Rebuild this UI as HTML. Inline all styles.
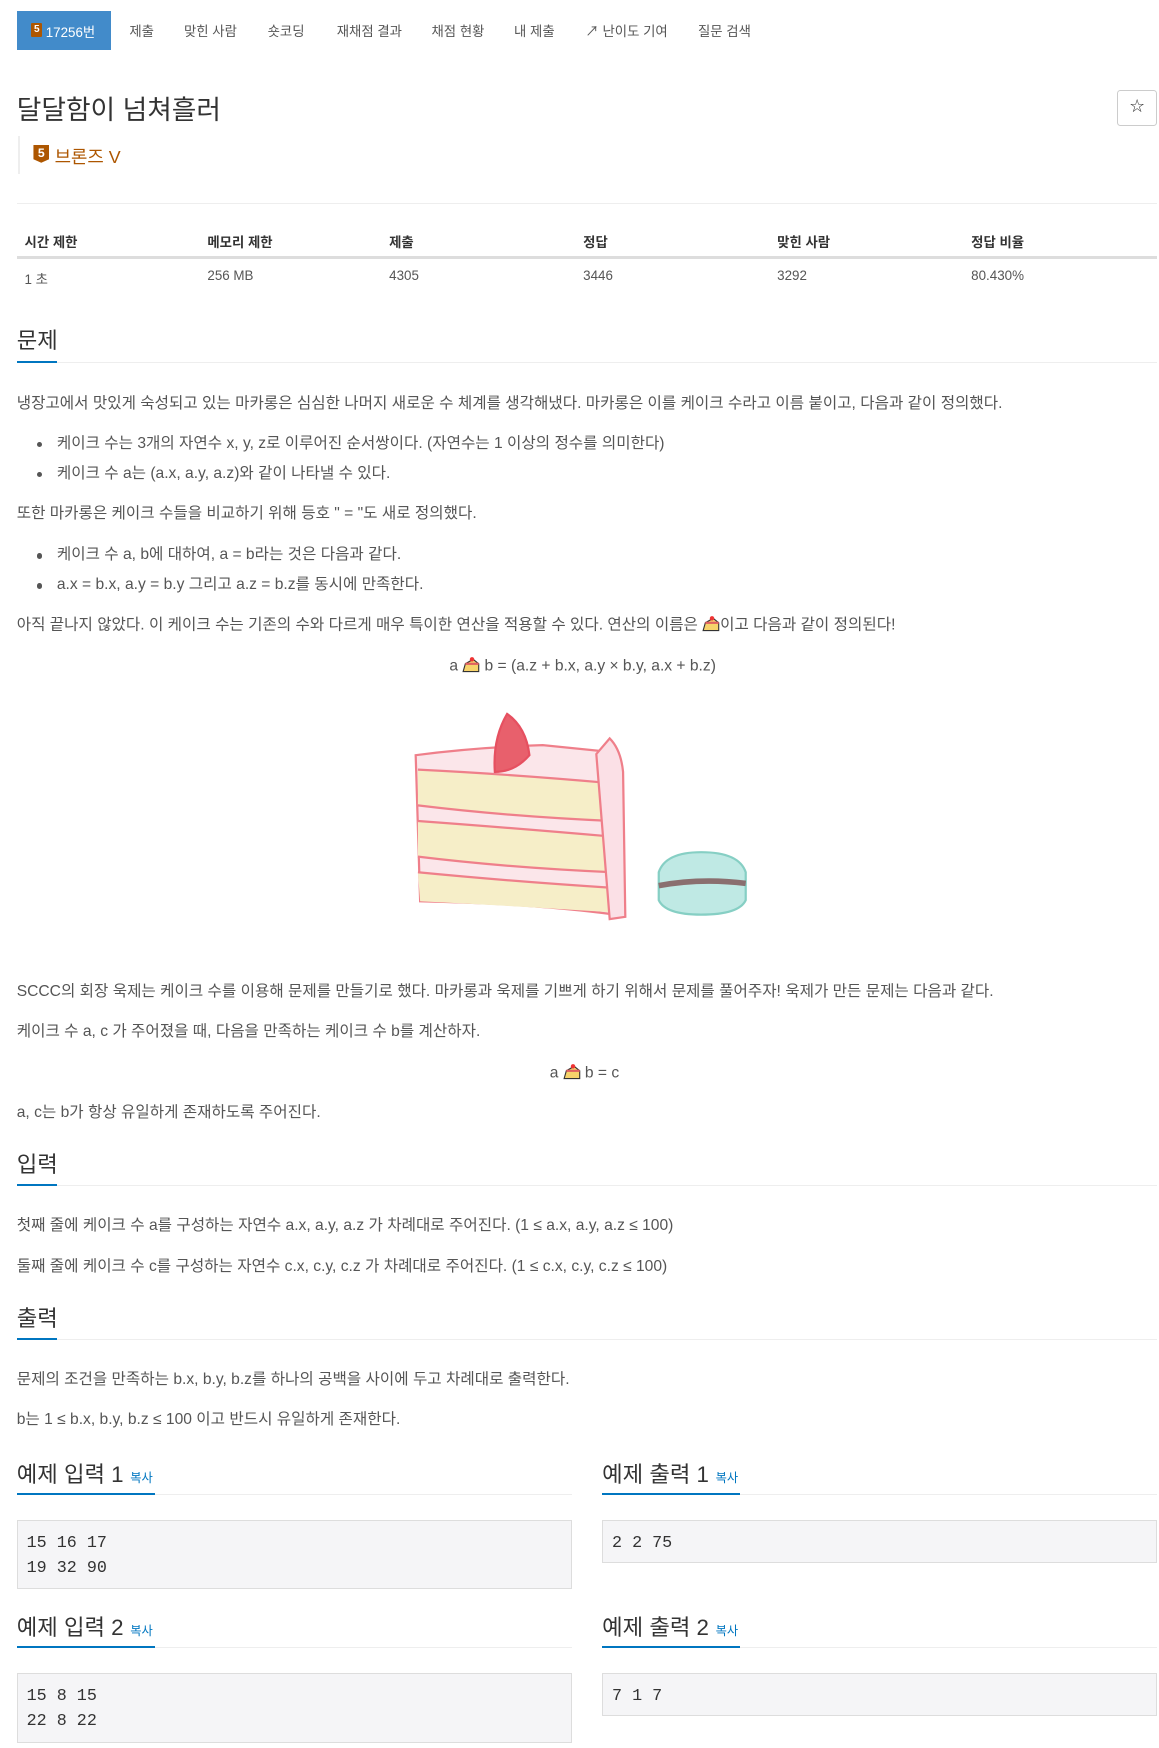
<!DOCTYPE html>
<html><head><meta charset="utf-8"><style>
html,body{margin:0;padding:0;background:#fff}
body{zoom:1.115;font-family:"Liberation Sans","Noto Sans CJK KR",sans-serif;color:#555;width:1040px;height:1568px;position:relative;overflow:hidden}
.a{position:absolute;white-space:nowrap}
.nav{font-size:12px;color:#555;top:18px}
.btn{left:15px;top:10px;width:85px;height:35px;background:#428bca;color:#fff}
.p{font-size:14px;color:#555;left:15px;line-height:18px}
.h{font-size:20px;color:#333;left:15px}
.ul{height:2px;background:#0076c0}
.gl{height:1px;background:#eee}
.li{left:33px}
.li:before{content:"";position:absolute;left:0;top:7px;width:5px;height:5px;border-radius:50%;background:#555}
.li span{margin-left:18px}
.th{font-size:12px;font-weight:bold;color:#333;top:207px}
.td{font-size:12px;color:#555;top:240px}
.pre{background:#f5f5f7;border:1px solid #ddd;font-family:"Liberation Mono",monospace;font-size:15px;color:#333;line-height:22.5px;padding:9px 8px;box-sizing:border-box}
.sh{font-size:20px;color:#333}
.cp{font-size:11px;color:#0076c0;margin-left:6px}
.ck{display:inline-block;width:16px;height:16px;vertical-align:-3px}
</style></head><body>
<div class="a btn"><span style="position:absolute;left:13px;top:11px;width:10px;height:12px;background:#ad5600;border-radius:1px;font-size:9px;color:#fff;text-align:center;line-height:12px;font-weight:bold">5</span><span style="position:absolute;left:26px;top:9px;font-size:12px">17256번</span></div>
<div class="a nav" style="left:116px">제출</div>
<div class="a nav" style="left:165px">맞힌 사람</div>
<div class="a nav" style="left:240px">숏코딩</div>
<div class="a nav" style="left:302px">재채점 결과</div>
<div class="a nav" style="left:387px">채점 현황</div>
<div class="a nav" style="left:461px">내 제출</div>
<div class="a nav" style="left:525px">↗ 난이도 기여</div>
<div class="a nav" style="left:626px">질문 검색</div>

<div class="a" style="left:15px;top:79px;font-size:24px;color:#333">달달함이 넘쳐흘러</div>
<div class="a" style="left:1002px;top:81px;width:34px;height:30px;border:1px solid #ccc;border-radius:3px;text-align:center;line-height:30px;font-size:13px;color:#333">☆</div>
<div class="a" style="left:16px;top:122px;width:2px;height:34px;background:#eee"></div>
<div class="a" style="left:30px;top:130px;width:14px;height:16px;background:#ad5600;color:#fff;font-size:11px;font-weight:bold;text-align:center;line-height:15px;clip-path:polygon(0 0,100% 0,100% 80%,50% 100%,0 80%)">5</div>
<div class="a" style="left:49px;top:128px;font-size:16px;color:#ad5600">브론즈 V</div>
<div class="a gl" style="left:15px;top:182px;width:1023px"></div>

<div class="a th" style="left:22px">시간 제한</div><div class="a th" style="left:186px">메모리 제한</div><div class="a th" style="left:349px">제출</div><div class="a th" style="left:523px">정답</div><div class="a th" style="left:697px">맞힌 사람</div><div class="a th" style="left:871px">정답 비율</div>
<div class="a" style="left:15px;top:230px;width:1023px;height:2px;background:#ddd"></div>
<div class="a td" style="left:22px">1 초</div><div class="a td" style="left:186px">256 MB</div><div class="a td" style="left:349px">4305</div><div class="a td" style="left:523px">3446</div><div class="a td" style="left:697px">3292</div><div class="a td" style="left:871px">80.430%</div>

<div class="a h" style="top:290px">문제</div>
<div class="a gl" style="left:15px;top:325px;width:1023px"></div>
<div class="a ul" style="left:15px;top:324px;width:36px"></div>
<div class="a p" style="top:353px">냉장고에서 맛있게 숙성되고 있는 마카롱은 심심한 나머지 새로운 수 체계를 생각해냈다. 마카롱은 이를 케이크 수라고 이름 붙이고, 다음과 같이 정의했다.</div>
<div class="a p li" style="top:389px"><span>케이크 수는 3개의 자연수 x, y, z로 이루어진 순서쌍이다. (자연수는 1 이상의 정수를 의미한다)</span></div>
<div class="a p li" style="top:416px"><span>케이크 수 a는 (a.x, a.y, a.z)와 같이 나타낼 수 있다.</span></div>
<div class="a p" style="top:452px">또한 마카롱은 케이크 수들을 비교하기 위해 등호 " = "도 새로 정의했다.</div>
<div class="a p li" style="top:489px"><span>케이크 수 a, b에 대하여, a = b라는 것은 다음과 같다.</span></div>
<div class="a p li" style="top:516px"><span>a.x = b.x, a.y = b.y 그리고 a.z = b.z를 동시에 만족한다.</span></div>
<div class="a p" style="top:552px">아직 끝나지 않았다. 이 케이크 수는 기존의 수와 다르게 매우 특이한 연산을 적용할 수 있다. 연산의 이름은 <svg class="ck" viewBox="0 0 16 16"><path d="M1 14 L3 7 L10 3 L15 7 L15 14 Z" fill="#f7d36b" stroke="#333" stroke-width="1"/><path d="M3 7 L15 7" stroke="#e06060" stroke-width="2"/><circle cx="9" cy="3" r="2" fill="#e33"/></svg>이고 다음과 같이 정의된다!</div>
<div class="a p" style="top:588px;left:403px">a <svg class="ck" viewBox="0 0 16 16"><path d="M1 14 L3 7 L10 3 L15 7 L15 14 Z" fill="#f7d36b" stroke="#333" stroke-width="1"/><path d="M3 7 L15 7" stroke="#e06060" stroke-width="2"/><circle cx="9" cy="3" r="2" fill="#e33"/></svg> b = (a.z + b.x, a.y × b.y, a.x + b.z)</div>

<svg class="a" style="left:367px;top:632px" width="310" height="200" viewBox="0 0 310 200">
<path d="M6 45 Q60 38 120 36 L180 42 L185 188 Q110 178 10 176 Z" fill="#fbe6ea" stroke="#ef7f8a" stroke-width="2"/>
<path d="M8 58 Q90 62 180 70 L182 104 Q90 100 8 90 Z" fill="#f6eec8"/>
<path d="M8 104 Q90 110 182 118 L183 150 Q90 146 8 136 Z" fill="#f6eec8"/>
<path d="M8 150 Q90 158 183 164 L184 186 Q90 180 10 176 Z" fill="#f6eec8"/>
<path d="M8 58 Q90 62 180 70 M8 90 Q90 100 182 104 M8 104 Q90 110 182 118 M8 136 Q90 146 183 150 M8 150 Q90 158 183 164" fill="none" stroke="#ef7f8a" stroke-width="2"/>
<path d="M168 44 L180 30 Q190 40 192 60 L194 190 L180 192 Z" fill="#fbe0e6" stroke="#ef7f8a" stroke-width="2"/>
<path d="M77 60 Q75 30 88 8 Q105 20 108 45 Q95 60 77 60 Z" fill="#e8606c" stroke="#e65060" stroke-width="2"/>
<path d="M224 150 Q230 132 262 132 Q296 132 302 150 L302 175 Q296 188 262 188 Q230 188 224 175 Z" fill="#bfe9e4" stroke="#86cfc4" stroke-width="2"/>
<path d="M224 162 Q262 155 302 160" stroke="#8a6f6f" stroke-width="5" fill="none"/>
</svg>

<div class="a p" style="top:881px">SCCC의 회장 욱제는 케이크 수를 이용해 문제를 만들기로 했다. 마카롱과 욱제를 기쁘게 하기 위해서 문제를 풀어주자! 욱제가 만든 문제는 다음과 같다.</div>
<div class="a p" style="top:917px">케이크 수 a, c 가 주어졌을 때, 다음을 만족하는 케이크 수 b를 계산하자.</div>
<div class="a p" style="top:953px;left:493px">a <svg class="ck" viewBox="0 0 16 16"><path d="M1 14 L3 7 L10 3 L15 7 L15 14 Z" fill="#f7d36b" stroke="#333" stroke-width="1"/><path d="M3 7 L15 7" stroke="#e06060" stroke-width="2"/><circle cx="9" cy="3" r="2" fill="#e33"/></svg> b = c</div>
<div class="a p" style="top:989px">a, c는 b가 항상 유일하게 존재하도록 주어진다.</div>

<div class="a h" style="top:1029px">입력</div>
<div class="a gl" style="left:15px;top:1063px;width:1023px"></div>
<div class="a ul" style="left:15px;top:1062px;width:36px"></div>
<div class="a p" style="top:1091px">첫째 줄에 케이크 수 a를 구성하는 자연수 a.x, a.y, a.z 가 차례대로 주어진다. (1 ≤ a.x, a.y, a.z ≤ 100)</div>
<div class="a p" style="top:1127px">둘째 줄에 케이크 수 c를 구성하는 자연수 c.x, c.y, c.z 가 차례대로 주어진다. (1 ≤ c.x, c.y, c.z ≤ 100)</div>

<div class="a h" style="top:1167px">출력</div>
<div class="a gl" style="left:15px;top:1201px;width:1023px"></div>
<div class="a ul" style="left:15px;top:1200px;width:36px"></div>
<div class="a p" style="top:1229px">문제의 조건을 만족하는 b.x, b.y, b.z를 하나의 공백을 사이에 두고 차례대로 출력한다.</div>
<div class="a p" style="top:1265px">b는 1 ≤ b.x, b.y, b.z ≤ 100 이고 반드시 유일하게 존재한다.</div>

<div class="a sh" style="left:15px;top:1307px">예제 입력 1<span class="cp">복사</span></div>
<div class="a gl" style="left:15px;top:1340px;width:498px"></div><div class="a ul" style="left:15px;top:1339px;width:124px"></div>
<div class="a sh" style="left:540px;top:1307px">예제 출력 1<span class="cp">복사</span></div>
<div class="a gl" style="left:540px;top:1340px;width:498px"></div><div class="a ul" style="left:540px;top:1339px;width:124px"></div>
<div class="a pre" style="left:15px;top:1363px;width:498px;height:62px">15 16 17<br>19 32 90</div>
<div class="a pre" style="left:540px;top:1363px;width:498px;height:39px">2 2 75</div>

<div class="a sh" style="left:15px;top:1444px">예제 입력 2<span class="cp">복사</span></div>
<div class="a gl" style="left:15px;top:1477px;width:498px"></div><div class="a ul" style="left:15px;top:1476px;width:124px"></div>
<div class="a sh" style="left:540px;top:1444px">예제 출력 2<span class="cp">복사</span></div>
<div class="a gl" style="left:540px;top:1477px;width:498px"></div><div class="a ul" style="left:540px;top:1476px;width:124px"></div>
<div class="a pre" style="left:15px;top:1500px;width:498px;height:63px">15 8 15<br>22 8 22</div>
<div class="a pre" style="left:540px;top:1500px;width:498px;height:39px">7 1 7</div>
</body></html>
